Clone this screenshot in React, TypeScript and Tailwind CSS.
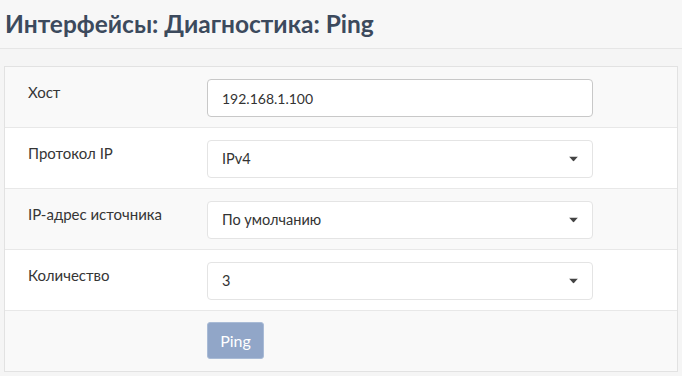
import React from "react";

function Caret() {
  return (
    <svg width="9" height="5" viewBox="0 0 9 5" className="absolute right-[14px] top-1/2 -translate-y-1/2">
      <path d="M0 0 L9 0 L4.5 5 Z" fill="#444" />
    </svg>
  );
}

function Row({ label, striped, children }: { label: string; striped?: boolean; children: React.ReactNode }) {
  return (
    <div className={`flex h-[61px] border-b border-[#e8e8e8] ${striped ? "bg-[#f9f9f9]" : "bg-white"}`}>
      <div className="w-[202px] pl-[23px] pt-[14px] text-[15px] text-[#353535]">{label}</div>
      <div className="pt-[12px]">{children}</div>
    </div>
  );
}

function Select({ value }: { value: string }) {
  return (
    <div className="relative flex h-[38px] w-[386px] items-center rounded-[4px] border border-[#e4e4e4] bg-white pl-[14px] text-[14.5px] text-[#333]">
      {value}
      <Caret />
    </div>
  );
}

export default function App() {
  return (
    <div className="h-[376px] w-[682px] overflow-hidden bg-[#f5f5f5]" style={{ fontFamily: "Lato, 'Noto Sans', sans-serif" }}>
      <div className="h-[49px] border-b border-[#e6e6e6] bg-[#f7f7f7] pl-[5px] pt-[6px]">
        <h1 className="text-[24.5px] font-bold text-[#3c4a5d]">Интерфейсы: Диагностика: Ping</h1>
      </div>
      <div className="pl-[4px] pr-[4px] pt-[17px]">
        <div className="border border-[#e2e2e2]">
          <div className="flex h-[61px] border-b border-[#e8e8e8] bg-[#f9f9f9]">
            <div className="w-[202px] pl-[23px] pt-[14px] text-[15px] text-[#353535]">Хост</div>
            <div className="pt-[12px]">
              <div className="flex h-[38px] w-[386px] items-center rounded-[4px] border border-[#c8c8c8] bg-white pl-[14px] text-[14px] text-[#333]">
                192.168.1.100
              </div>
            </div>
          </div>
          <Row label="Протокол IP">
            <Select value="IPv4" />
          </Row>
          <Row label="IP-адрес источника" striped>
            <Select value="По умолчанию" />
          </Row>
          <Row label="Количество">
            <Select value="3" />
          </Row>
          <div className="flex h-[60px] bg-[#f9f9f9]">
            <div className="w-[202px]" />
            <div className="pt-[11px]">
              <button className="h-[37px] w-[57px] rounded-[3px] border border-[#a9bbd6] bg-[#91a6c8] text-[16px] text-white">
                Ping
              </button>
            </div>
          </div>
        </div>
      </div>
    </div>
  );
}
